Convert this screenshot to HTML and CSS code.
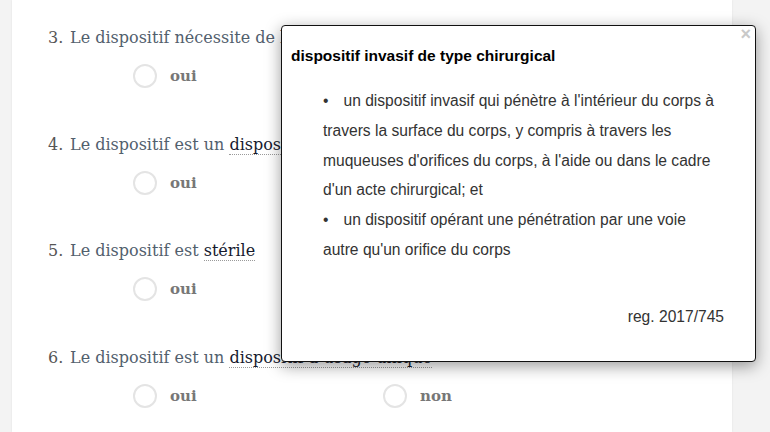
FILE: index.html
```html
<!DOCTYPE html>
<html lang="fr">
<head>
<meta charset="utf-8">
<title>Questionnaire</title>
<link rel="stylesheet" href="styles.css">
</head>
<body>
<div class="page">
  <div class="question">
    <p class="q-text"><span class="q-num">3.</span>Le dispositif nécessite de l'énergie pour fonctionner</p>
    <div class="options">
      <label class="option"><span class="radio"></span><span class="opt-label">oui</span></label>
      <label class="option"><span class="radio"></span><span class="opt-label">non</span></label>
    </div>
  </div>
  <div class="question">
    <p class="q-text"><span class="q-num">4.</span>Le dispositif est un <span class="term">dispositif invasif de type chirurgical</span></p>
    <div class="options">
      <label class="option"><span class="radio"></span><span class="opt-label">oui</span></label>
      <label class="option"><span class="radio"></span><span class="opt-label">non</span></label>
    </div>
  </div>
  <div class="question">
    <p class="q-text"><span class="q-num">5.</span>Le dispositif est <span class="term">stérile</span></p>
    <div class="options">
      <label class="option"><span class="radio"></span><span class="opt-label">oui</span></label>
      <label class="option"><span class="radio"></span><span class="opt-label">non</span></label>
    </div>
  </div>
  <div class="question">
    <p class="q-text"><span class="q-num">6.</span>Le dispositif est un <span class="term">dispositif à usage unique</span></p>
    <div class="options">
      <label class="option"><span class="radio"></span><span class="opt-label">oui</span></label>
      <label class="option"><span class="radio"></span><span class="opt-label">non</span></label>
    </div>
  </div>
</div>

<div class="popup">
  <span class="close">×</span>
  <h2 class="popup-title">dispositif invasif de type chirurgical</h2>
  <div class="popup-body">
    <p class="item"><span class="bullet">•</span>un dispositif invasif qui pénètre à l'intérieur du corps à travers la surface du corps, y compris à travers les muqueuses d'orifices du corps, à l'aide ou dans le cadre d'un acte chirurgical; et</p>
    <p class="item"><span class="bullet">•</span>un dispositif opérant une pénétration par une voie autre qu'un orifice du corps</p>
    <p class="ref">reg. 2017/745</p>
  </div>
</div>
</body>
</html>
```

FILE: styles.css
```css
html, body {
  margin: 0;
  padding: 0;
}
body {
  background: #f3f3f3;
  width: 770px;
  height: 432px;
  overflow: hidden;
  position: relative;
}
.page {
  width: 720px;
  margin-left: 12px;
  min-height: 432px;
  background: #fff;
  box-shadow: 0 0 2px rgba(0,0,0,0.08);
  padding-top: 26px;
  box-sizing: border-box;
}
.question {
  padding-left: 36px;
  margin-bottom: 44.5px;
}
.q-text {
  margin: 0;
  font-family: "DejaVu Serif", serif;
  font-size: 16px;
  line-height: 24px;
  color: #52606d;
  white-space: nowrap;
}
.q-num {
  display: inline-block;
  width: 22px;
  color: #555;
}
.term {
  color: #161a2e;
  border-bottom: 1px dotted #9a9a9a;
}
.options {
  display: flex;
  margin-top: 14px;
  padding-left: 85px;
  height: 24px;
}
.option {
  display: flex;
  align-items: center;
  width: 250px;
}
.radio {
  width: 24px;
  height: 24px;
  box-sizing: border-box;
  border: 2.5px solid #e4e4e4;
  border-radius: 50%;
}
.opt-label {
  margin-left: 13px;
  font-family: "DejaVu Serif", serif;
  font-weight: bold;
  font-size: 15px;
  color: #777;
}
.popup {
  position: absolute;
  left: 281px;
  top: 25px;
  width: 475px;
  height: 337px;
  box-sizing: border-box;
  background: #fff;
  border: 1px solid #111;
  border-radius: 4px;
  box-shadow: 0 4px 16px rgba(0,0,0,0.4);
  font-family: "Liberation Sans", Arial, sans-serif;
  padding: 20px 31px 0 9px;
}
.close {
  position: absolute;
  right: 4px;
  top: 0;
  font-size: 18px;
  font-weight: bold;
  color: #c9c9c9;
  line-height: 17px;
}
.popup-title {
  margin: 0;
  font-size: 15.5px;
  line-height: 20px;
  font-weight: bold;
  color: #000;
}
.popup-body {
  margin-top: 20px;
  padding-left: 32px;
  font-size: 15.6px;
  line-height: 29.8px;
  color: #333;
}
.item {
  margin: 0;
}
.bullet {
  margin-right: 15px;
}
.ref {
  margin: 37px 0 0;
  text-align: right;
}
```
